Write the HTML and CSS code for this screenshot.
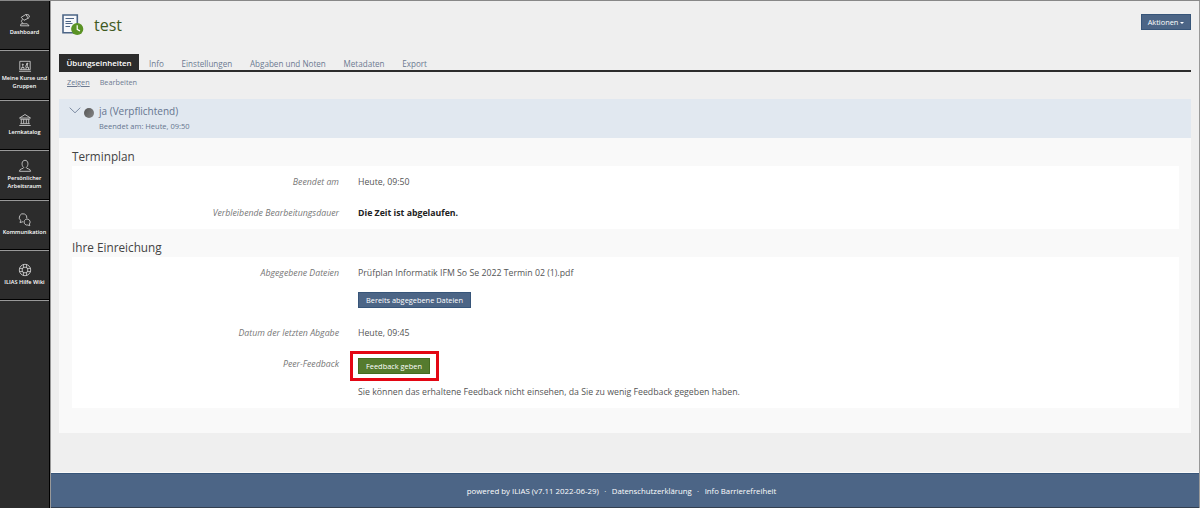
FILE: index.html
```html
<!DOCTYPE html>
<html lang="de">
<head>
<meta charset="utf-8">
<title>test</title>
<link rel="stylesheet" href="styles.css">
</head>
<body>
<div class="page">
  <nav class="sidebar">
    <a class="side-item"><svg viewBox="0 0 14 14"><path d="M3.2 4.3 7.8 1.5 10.3 5.2 6 7.3ZM7.8 1.5 10.6 1.8 11.5 4 10.3 5.2M4.4 6.3 3.4 8.4 5 10.7M3 10.8H9.3L11 12.8H2.5Z"/></svg><span>Dashboard</span></a>
    <a class="side-item two"><svg viewBox="0 0 14 14"><path d="M1.8 2.3H12.2V10.7H1.8ZM1 12.3H13M3.7 10.5V8.5H6V10.5M8 10.5V8.3H10.5V10.5M4.8 5.5V7.8M9 4.5 7.5 7.7M9.3 4.4V7.8"/><circle cx="4.8" cy="5.4" r=".5"/><circle cx="9.3" cy="4.6" r=".5"/></svg><span>Meine Kurse und Gruppen</span></a>
    <a class="side-item"><svg viewBox="0 0 14 14"><path d="M1.5 5 7 1.5 12.5 5ZM2.3 6.3H11.7M3.3 6.5V10.5M5.7 6.5V10.5M8.3 6.5V10.5M10.7 6.5V10.5M2.3 10.7H11.7M1.3 12.5H12.7"/></svg><span>Lernkatalog</span></a>
    <a class="side-item two"><svg viewBox="0 0 14 14"><path d="M5.7 8.5C3.2 6.5 3.5 1.3 7 1.3S10.8 6.5 8.3 8.5C8 10 12.6 9.3 12.6 12.3H1.4C1.4 9.3 6 10 5.7 8.5Z"/></svg><span>Persönlicher Arbeitsraum</span></a>
    <a class="side-item"><svg viewBox="0 0 14 14"><path d="M2 9.5 2.7 7.5A3.8 3.8 0 1 1 8.8 5.3M2 9.5 5.2 8.7M11.8 12.7 11.4 11A3 3 0 1 0 9.8 12Z"/></svg><span>Kommunikation</span></a>
    <a class="side-item"><svg viewBox="0 0 14 14"><circle cx="7" cy="7" r="5.7"/><circle cx="7" cy="7" r="2.9"/><path d="M5.4 1.5V4.6M8.6 1.5V4.6M5.4 9.4V12.5M8.6 9.4V12.5M1.5 5.4H4.6M1.5 8.6H4.6M9.4 5.4H12.5M9.4 8.6H12.5"/></svg><span>ILIAS Hilfe Wiki</span></a>
  </nav>
  <div class="content">
    <main class="main">
      <header class="head">
        <svg class="exercise" viewBox="0 0 22 22"><path class="sheet" d="M1 1H15.3V18.8H1Z"/><path class="lines" d="M3.5 4.5H12M3.5 7.5H9M3.5 9.5H10.5M3.5 12.5H8"/><circle cx="15.2" cy="15" r="6.1"/><path class="hands" d="M15.2 11.3V15.3L18 17"/></svg>
        <h1>test</h1>
        <button class="btn actions">Aktionen<i class="caret"></i></button>
      </header>
      <div class="tabs"><a class="active">Übungseinheiten</a><a>Info</a><a>Einstellungen</a><a>Abgaben und Noten</a><a>Metadaten</a><a>Export</a></div>
      <div class="subtabs"><a class="current">Zeigen</a><a>Bearbeiten</a></div>
      <section class="panel">
        <div class="unit">
          <svg class="chevron" viewBox="0 0 12 7"><path d="M.7 .7 6 5.8 11.3 .7"/></svg>
          <span class="status"></span>
          <div><div class="unit-title">ja (Verpflichtend)</div><div class="unit-date">Beendet am: Heute, 09:50</div></div>
        </div>
        <h2>Terminplan</h2>
        <div class="card schedule">
          <div class="row"><span class="label">Beendet am</span><span class="value">Heute, 09:50</span></div>
          <div class="row"><span class="label">Verbleibende Bearbeitungsdauer</span><b class="value">Die Zeit ist abgelaufen.</b></div>
        </div>
        <h2>Ihre Einreichung</h2>
        <div class="card">
          <div class="row files"><span class="label">Abgegebene Dateien</span><div class="value"><div class="file">Prüfplan Informatik IFM So Se 2022 Termin 02 (1).pdf</div><button class="btn submitted">Bereits abgegebene Dateien</button></div></div>
          <div class="row"><span class="label">Datum der letzten Abgabe</span><span class="value">Heute, 09:45</span></div>
          <div class="row"><span class="label">Peer-Feedback</span><div class="value"><div class="highlight"><button class="btn green">Feedback geben</button></div><div class="note">Sie können das erhaltene Feedback nicht einsehen, da Sie zu wenig Feedback gegeben haben.</div></div></div>
        </div>
      </section>
    </main>
    <footer><span class="powered">powered by ILIAS (v7.11 2022-06-29)</span><span class="dot">·</span><span>Datenschutzerklärung</span><span class="dot">·</span><span>Info Barrierefreiheit</span></footer>
  </div>
</div>
</body>
</html>
```
FILE: styles.css
```css
* { box-sizing: border-box; }
body { margin: 0; font-family: "Open Sans", sans-serif; font-size: 8.75px; line-height: 12px; color: #555; }
.page { display: flex; width: 1200px; height: 508px; overflow: hidden; background: #2c2c2c; border-top: 1px solid #888; }
.sidebar { width: 50px; flex: none; border-right: 1px solid #000; }
.side-item { display: flex; flex-direction: column; align-items: center; height: 50px; padding-top: 12px; border-bottom: 1px solid #999; box-shadow: inset 0 -1px #000; color: #fff; font-size: 5.6px; font-weight: 600; line-height: 8px; text-align: center; }
.side-item.two { padding-top: 8px; }
.side-item svg { width: 14px; height: 14px; flex: none; fill: none; stroke: #ddd; stroke-width: .8; margin-bottom: 1px; }
.side-item span { white-space: nowrap; }
.side-item.two span { white-space: normal; width: 49px; }
.content { flex: 1; display: flex; flex-direction: column; border-left: 1px solid #999; border-right: 1px solid #999; background: #efefef; }
.main { height: 472px; padding: 13px 8px 0; border-bottom: 1px solid #fafafa; }
.head { display: flex; height: 40px; align-items: flex-start; }
.exercise { width: 22px; height: 22px; margin: 0 0 0 3px; fill: none; }
.sheet { fill: #f7f8fb; stroke: #4c6586; stroke-width: 1.6; }
.lines { stroke: #4c6586; stroke-width: 1.1; }
.exercise circle { fill: #5a9224; }
.hands { stroke: #fff; stroke-width: 1.2; }
h1 { margin: 0 0 0 10px; font-size: 16px; line-height: 22px; font-weight: 400; color: #3f5a1f; }
.btn { font: 500 7.4px/14px "Open Sans", sans-serif; color: #fff; background: #4c6586; border: 1px solid #375579; padding: 0; white-space: nowrap; text-align: center; height: 16px; display: block; }
.actions { width: 50px; margin-left: auto; }
.caret { display: inline-block; border: 2.5px solid transparent; border-top-color: #fff; border-bottom: 0; margin-left: 2px; vertical-align: 1px; }
.tabs { display: flex; height: 18px; border-bottom: 2px solid #2c2c2c; color: #6c7a91; font-size: 8.1px; line-height: 20px; }
.tabs a { white-space: nowrap; margin-right: 17.7px; }
.tabs .active { width: 80px; text-align: center; background: #2c2c2c; color: #fff; font-size: 7.9px; font-weight: 600; margin-right: 10px; height: 17px; line-height: 19px; }
.subtabs { display: flex; gap: 10px; height: 27px; padding: 4px 0 0 8px; font-size: 7.3px; line-height: 13px; color: #6c7a91; }
.current { text-decoration: underline; }
.panel { height: 334px; background: #f9f9f9; }
.unit { display: flex; height: 39px; padding: 6px 0 0 10px; background: #e1e8f0; color: #65758f; }
.chevron { width: 12px; height: 7px; margin-top: 2px; fill: none; stroke: #65758f; stroke-width: .8; }
.status { width: 10px; height: 10px; margin: 3px 5px 0 3px; border-radius: 50%; background: linear-gradient(120deg, #555, #858585); }
.unit-title { font-size: 10px; line-height: 13px; }
.unit-date { font-size: 7.5px; line-height: 11px; margin-top: 3px; }
h2 { margin: 0; padding: 10px 0 0 13px; height: 28px; font-size: 11.75px; line-height: 16px; font-weight: 400; color: #444; }
.card { margin: 0 12px 0 13px; background: #fff; height: 151px; padding-top: 10px; }
.card.schedule { height: 63px; padding-top: 10px; }
.row { display: flex; height: 31px; }
.row.files { height: 60px; }
.label { width: 267px; margin-right: 19px; text-align: right; font-style: italic; color: #777; flex: none; }
b.value { color: #222; }
.submitted { width: 113px; margin-top: 13px; }
.highlight { position: relative; left: -8px; top: -7px; width: 89px; height: 30px; border: 3px solid #e30613; padding: 4px 0 0 5px; }
.green { width: 72px; background: #557b2e; border-color: #446b20; }
.note { margin-top: -2px; }
footer { height: 35px; flex: none; display: flex; justify-content: center; align-items: center; background: #4c6586; border-top: 1px solid #375579; border-bottom: 1px solid #333f50; color: #fff; font-size: 7.75px; font-weight: 500; white-space: nowrap; padding-right: 7px; }
.powered { font-size: 7.85px; }
.dot { width: 13px; text-align: center; }
```
